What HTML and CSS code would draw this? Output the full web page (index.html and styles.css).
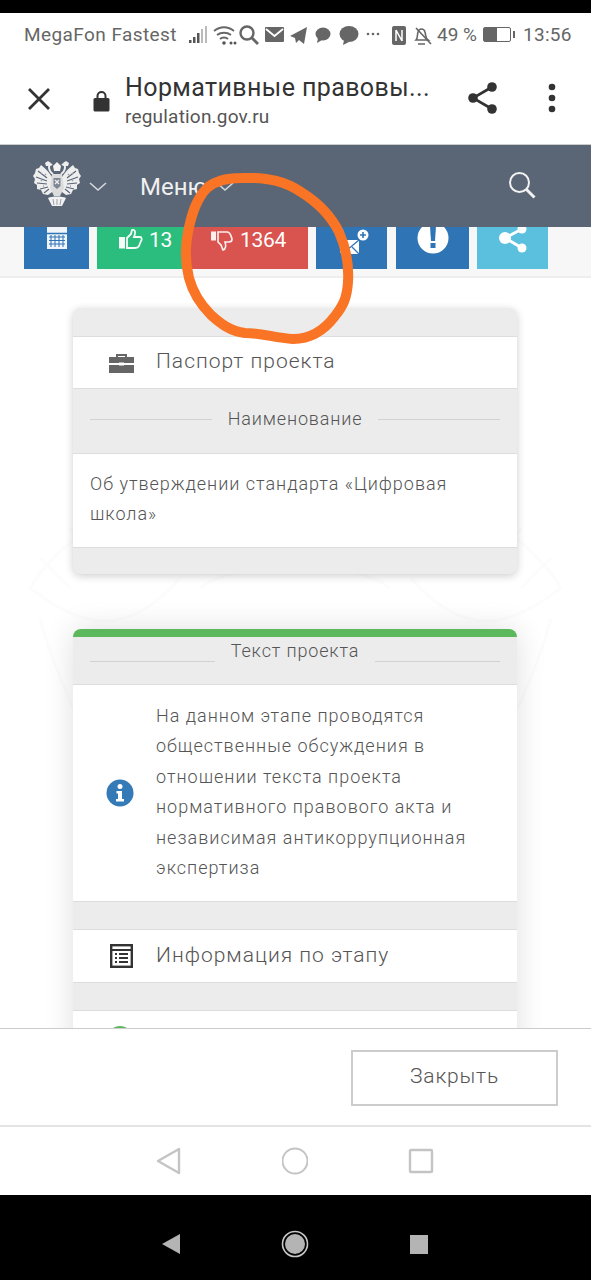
FILE: index.html
```html
<!DOCTYPE html>
<html lang="en">
<head>
    <meta charset="UTF-8">
    <meta name="viewport" content="width=device-width, initial-scale=1.0">
    <title>Нормативные правовые акты</title>
    <link rel="stylesheet" href="styles.css">
</head>
<body>
    <div class="phone-top"></div>

    <div class="status-bar">
        <span class="carrier">MegaFon Fastest</span>
        <svg class="status-icons" width="246" height="24" viewBox="0 0 246 24">
            <!-- signal -->
            <g fill="#555"><rect x="2" y="17" width="2.5" height="3"/><rect x="6" y="14" width="2.5" height="6"/><rect x="10" y="10" width="2.5" height="10"/></g>
            <g fill="#bbb"><rect x="14" y="6" width="2" height="14"/><rect x="18" y="3" width="2" height="17"/></g>
            <!-- wifi -->
            <g fill="none" stroke="#666" stroke-width="1.8"><path d="M27 8c6-5 14-5 20 0"/><path d="M30 12c4-3 10-3 14 0"/><path d="M33 16c2-2 6-2 8 0"/></g>
            <g fill="#555"><circle cx="37" cy="20" r="1.8"/><circle cx="44" cy="20" r="1.5"/><circle cx="48" cy="20" r="1.5"/></g>
            <!-- search -->
            <circle cx="60" cy="10" r="6.5" fill="none" stroke="#666" stroke-width="2.4"/>
            <path d="M65 15l6 6" stroke="#666" stroke-width="2.8"/>
            <!-- mail -->
            <rect x="78" y="4" width="19" height="15" rx="1" fill="#666"/>
            <path d="M79 6l8.500 7 8.500-7" fill="none" stroke="#fff" stroke-width="1.800"/>
            <!-- telegram -->
            <path d="M103 13L120 4l-3 17-5-4-3 3-1-5z" fill="#666"/>
            <!-- bubbles -->
            <ellipse cx="136" cy="11" rx="7.500" ry="6.500" fill="#666"/>
            <path d="M131 15l-1 5 5-3z" fill="#666"/>
            <ellipse cx="162" cy="11" rx="9.500" ry="8" fill="#666"/>
            <path d="M157 17l-1 5 6-3z" fill="#666"/>
            <!-- more -->
            <g fill="#666"><circle cx="181" cy="11" r="1.300"/><circle cx="186" cy="11" r="1.300"/><circle cx="191" cy="11" r="1.300"/></g>
            <!-- nfc -->
            <rect x="205" y="3" width="14" height="19" rx="2" fill="#666"/>
            <path d="M209 7v11M215 7v11M209 7l6 11" stroke="#fff" stroke-width="1.500" fill="none"/>
            <!-- muted bell -->
            <path d="M231 21h7M229 17c2-2 1-5 2-8 1-4 6-4 7 0 1 3 0 6 3 8z" fill="none" stroke="#666" stroke-width="1.600"/>
            <path d="M229 5l15 16" stroke="#666" stroke-width="1.600"/>
        </svg>
        <span class="battery-text">49 %</span>
        <span class="battery"><span class="battery-level"></span></span>
        <span class="clock">13:56</span>
    </div>

    <div class="browser-bar">
        <svg class="close-icon" width="26" height="26" viewBox="0 0 26 26">
            <path d="M3 3l20 20M23 3L3 23" stroke="#333" stroke-width="2.800"/>
        </svg>
        <svg class="lock-icon" width="17" height="22" viewBox="0 0 17 22">
            <path d="M4.500 9V6a4 4 0 0 1 8 0v3" fill="none" stroke="#333" stroke-width="2"/>
            <rect x="0.500" y="8" width="16" height="13.500" rx="1.500" fill="#333"/>
        </svg>
        <div class="browser-title">
            <div class="page-name">Нормативные правовы...</div>
            <div class="page-url">regulation.gov.ru</div>
        </div>
        <svg class="share-icon" width="32" height="34" viewBox="0 0 32 34">
            <path d="M25 6L6 17l19 11" fill="none" stroke="#333" stroke-width="2.600"/>
            <circle cx="25" cy="6" r="4.800" fill="#333"/>
            <circle cx="6" cy="17" r="4.800" fill="#333"/>
            <circle cx="25" cy="28" r="4.800" fill="#333"/>
        </svg>
        <svg class="dots-icon" width="8" height="30" viewBox="0 0 8 30">
            <circle cx="4" cy="4" r="3.300" fill="#333"/>
            <circle cx="4" cy="15" r="3.300" fill="#333"/>
            <circle cx="4" cy="26" r="3.300" fill="#333"/>
        </svg>
    </div>

    <div class="site-nav">
        <svg class="emblem" width="48" height="46" viewBox="0 0 48 46">
            <defs>
                <g id="eagle-wing">
                    <path d="M19 16C16 11 12 7 8 4L6 7 3 8 2 12 0 15l2 3-1 4 3 2v4l4 1 2 4 5 1 4-3z" fill="#eee"/>
                    <path d="M5 10l9 7M3 16l11 4M4 22l10 1M7 28l8-2M11 32l5-4" stroke="#5a6576" stroke-width="1.100" fill="none"/>
                    <path d="M8 12l1 1M12 13l1 1M8 19l1 1M10 25l1 0" stroke="#9aa2ae" stroke-width="1.500"/>
                    <!-- head and crown -->
                    <path d="M20 13c-3-2-4-4-4-7 0-2 2-3 3-2" fill="none" stroke="#eee" stroke-width="2"/>
                    <path d="M12 2l3-2 3 2-1 3h-4z" fill="#eee"/>
                </g>
            </defs>
            <use href="#eagle-wing"/>
            <use href="#eagle-wing" transform="matrix(-1 0 0 1 48 0)"/>
            <!-- middle crown -->
            <path d="M20 5l4-4 4 4-1 5h-6z" fill="#f4f4f4"/>
            <!-- body and shield -->
            <path d="M19 13h10l2 14-4 8h-6l-4-8z" fill="#dcdcdc"/>
            <path d="M20.500 17h7v8l-3.500 3-3.500-3z" fill="#7d8694"/>
            <path d="M22 19l4 4M26 19l-4 4" stroke="#eee" stroke-width="1.300"/>
            <!-- tail -->
            <path d="M15 37c4-2 14-2 18 0l-4 8h-10z" fill="#f2f2f2"/>
            <path d="M20 38l1 6M24 38v6M28 38l-1 6" stroke="#8d95a2" stroke-width="0.900"/>
        </svg>
        <svg class="chevron" width="18" height="10" viewBox="0 0 18 10"><path d="M1 1l8 7 8-7" fill="none" stroke="#d5d8dd" stroke-width="1.600"/></svg>
        <span class="menu-label">Меню</span>
        <svg class="chevron" width="18" height="10" viewBox="0 0 18 10"><path d="M1 1l8 7 8-7" fill="none" stroke="#d5d8dd" stroke-width="1.600"/></svg>
        <svg class="site-search" width="28" height="28" viewBox="0 0 28 28">
            <circle cx="11.500" cy="11.500" r="9.500" fill="none" stroke="#f2f2f2" stroke-width="2"/>
            <path d="M18.500 18.500l8 8" stroke="#f2f2f2" stroke-width="3"/>
        </svg>
    </div>

    <div class="toolbar">
        <div class="tool tool-blue tool-calendar">
            <svg width="22" height="26" viewBox="0 0 22 26">
                <path d="M1 2h20v22H1z" fill="#f1f4f8"/>
                <path d="M0 8.500h22" stroke="#2f75b5" stroke-width="1.500"/>
                <path d="M3 12h16M3 15.500h16M3 19h16M5 10v12M9 10v12M13 10v12M17 10v12" stroke="#2f75b5" stroke-width="1"/>
            </svg>
        </div>
        <div class="tool tool-green tool-up">
            <svg width="24" height="20" viewBox="0 0 24 20">
                <rect x="0" y="8" width="6" height="11.500" fill="#f4fbf8"/>
                <path d="M8 9l4-4 1-4c3-1 4 2 2 7h6c2 0 2 3 1 4l-2 5c-1 2-2 2-4 2H8z" fill="none" stroke="#f4fbf8" stroke-width="1.800"/>
            </svg>
            <span>13</span>
        </div>
        <div class="tool tool-red">
            <svg width="22" height="20" viewBox="0 0 22 20">
                <rect x="0" y="0.500" width="5" height="9" fill="#fbeeee"/>
                <path d="M7 1h9c2 0 3 1 4 4l1 3c0 2-1 3-3 3h-4c1 3 1 7-2 8l-2-5-3-3z" fill="none" stroke="#fbeeee" stroke-width="1.700"/>
            </svg>
            <span>1364</span>
        </div>
        <div class="tool tool-blue tool-mail">
            <svg width="30" height="30" viewBox="0 0 30 30">
                <path d="M1 12h19v14H1z" fill="#fff"/>
                <path d="M1 12l9.500 8 9.500-8M1 26l7-7M20 26l-7-7" fill="none" stroke="#2f75b5" stroke-width="1.300"/>
                <circle cx="24" cy="7" r="5.500" fill="#fff"/>
                <path d="M24 4v6M21 7h6" stroke="#2f75b5" stroke-width="1.600"/>
            </svg>
        </div>
        <div class="tool tool-blue tool-alert">
            <svg width="32" height="32" viewBox="0 0 32 32">
                <circle cx="16" cy="16" r="15.500" fill="#fff"/>
                <path d="M13 4h6l-1 15h-4z" fill="#2f75b5"/>
                <rect x="13.500" y="21" width="5" height="5" fill="#2f75b5"/>
            </svg>
        </div>
        <div class="tool tool-cyan">
            <svg width="30" height="30" viewBox="0 0 30 30">
                <path d="M24 5L7 14l17 10" fill="none" stroke="#fff" stroke-width="3"/>
                <circle cx="24" cy="5" r="4.500" fill="#fff"/>
                <circle cx="7" cy="14" r="6" fill="#fff"/>
                <circle cx="24" cy="24" r="4.500" fill="#fff"/>
            </svg>
        </div>
    </div>

    <div class="content">
        <!-- faint emblem behind the cards -->
        <svg class="watermark" width="591" height="260" viewBox="0 0 591 260">
            <g fill="none" stroke="#fcfcfc" stroke-width="3">
                <path d="M30 120C60 70 120 40 170 10M40 90l30 30M70 60l25 40M105 35l20 40"/>
                <path d="M561 120C531 70 471 40 421 10M551 90l-30 30M521 60l-25 40M486 35l-20 40"/>
                <path d="M30 120c40 30 90 60 150-10M200 120c40-30 150-30 190 0M561 120c-40 30-90 60-150-10"/>
                <path d="M40 150c10 40 25 70 33 90M551 150c-10 40-25 70-33 90"/>
            </g>
        </svg>

        <div class="card">
            <div class="card-gap"></div>
            <div class="row">
                <svg class="row-icon" width="25" height="20" viewBox="0 0 25 20">
                    <path d="M8 4V2h9v2" fill="none" stroke="#666" stroke-width="2"/>
                    <path d="M0 4h25v6H0zM0 12h25v8H0z" fill="#666"/>
                    <rect x="10" y="9.500" width="5" height="3" fill="#fff"/>
                </svg>
                <span class="row-text">Паспорт проекта</span>
            </div>
            <div class="legend">
                <span class="legend-line"></span>
                <span>Наименование</span>
                <span class="legend-line"></span>
            </div>
            <div class="name-text">Об утверждении стандарта «Цифровая школа»</div>
            <div class="card-foot"></div>
        </div>

        <div class="card card-green">
            <div class="legend legend-top">
                <span class="legend-line"></span>
                <span>Текст проекта</span>
                <span class="legend-line"></span>
            </div>
            <div class="info-row">
                <svg class="info-icon" width="28" height="28" viewBox="0 0 28 28">
                    <circle cx="14" cy="14" r="13.500" fill="#337ab7"/>
                    <circle cx="14" cy="7.500" r="2.500" fill="#fff"/>
                    <path d="M10.500 12h5.500v8h2v2.500h-8V20h2v-5.500h-1.500z" fill="#fff"/>
                </svg>
                <p>На данном этапе проводятся общественные обсуждения в отношении текста проекта нормативного правового акта и независимая антикоррупционная экспертиза</p>
            </div>
            <div class="card-gap"></div>
            <div class="row">
                <svg class="row-icon" width="23" height="24" viewBox="0 0 23 24">
                    <rect x="1.200" y="1.200" width="20.600" height="21.600" fill="none" stroke="#333" stroke-width="2.400"/>
                    <path d="M1 6h21" stroke="#333" stroke-width="2"/>
                    <path d="M5 10h2M9 10h9M5 14h2M9 14h9M5 18h2M9 18h9" stroke="#333" stroke-width="1.800"/>
                </svg>
                <span class="row-text">Информация по этапу</span>
            </div>
            <div class="card-gap"></div>
            <div class="row row-cut">
                <span class="green-dot"></span>
            </div>
        </div>
    </div>

    <div class="footer">
        <button class="close-btn" type="button">Закрыть</button>
    </div>

    <div class="soft-nav">
        <svg width="26" height="28" viewBox="0 0 26 28"><path d="M23 2v24L2 14z" fill="none" stroke="#c4c4c4" stroke-width="2.400" stroke-linejoin="round"/></svg>
        <svg width="26" height="28" viewBox="0 0 26 28"><circle cx="13" cy="14" r="12.500" fill="none" stroke="#c4c4c4" stroke-width="2"/></svg>
        <svg width="26" height="28" viewBox="0 0 26 28"><rect x="2" y="3" width="22" height="22" rx="1" fill="none" stroke="#c4c4c4" stroke-width="2.400"/></svg>
    </div>

    <div class="hard-nav">
        <svg width="26" height="28" viewBox="0 0 26 28"><path d="M22 4v20L4 14z" fill="#b4b4b4"/></svg>
        <svg width="28" height="28" viewBox="0 0 28 28"><circle cx="14" cy="14" r="12.500" fill="none" stroke="#c8c8c8" stroke-width="1.600"/><circle cx="14" cy="14" r="10" fill="#b4b4b4"/></svg>
        <svg width="26" height="28" viewBox="0 0 26 28"><rect x="4" y="5" width="18" height="19" fill="#b4b4b4"/></svg>
    </div>

    <!-- marker drawn over the screenshot -->
    <svg class="marker" width="591" height="400" viewBox="0 0 591 400">
        <path d="M241 178C270 177 286 182 301 192C322 205 332 218 339 232C347 250 349 265 348 282C347 298 343 306 335 316C326 328 312 339 293 339C275 338 262 333 245 333C230 331 221 324 211 315C201 305 193 293 189 278C185 262 185 247 188 232C192 212 197 198 207 188C216 180 228 178 241 178Z" fill="none" stroke="#f97424" stroke-width="10"/>
    </svg>
</body>
</html>
```
FILE: styles.css
```css
body {
    margin: 0;
    width: 591px;
    height: 1280px;
    overflow: hidden;
    position: relative;
    font-family: Roboto, "Noto Sans", sans-serif;
    background: #fff;
    color: #333;
}

.phone-top { height: 13px; background: #000; }

.status-bar {
    height: 43px;
    display: flex;
    align-items: center;
    padding-left: 24px;
    font-size: 19px;
    color: #666;
}
.carrier { width: 163px; letter-spacing: 0.42px; }
.battery-text { width: 46px; margin-left: 4px; }
.battery {
    width: 26px;
    height: 13px;
    border: 1.5px solid #666;
    border-radius: 2px;
    margin-right: 12px;
    position: relative;
}
.battery::after {
    content: "";
    position: absolute;
    right: -5px;
    top: 3px;
    width: 2px;
    height: 7px;
    background: #666;
}
.battery-level { display: block; width: 13px; height: 13px; background: #666; }
.clock { letter-spacing: 0.3px; }

.browser-bar {
    height: 89px;
    display: flex;
    align-items: center;
    border-bottom: 1px solid #ccc;
    box-sizing: border-box;
}
.close-icon { margin-left: 26px; margin-top: -2px; }
.lock-icon { margin-left: 41px; margin-top: 2px; }
.browser-title { margin-left: 15px; width: 343px; margin-top: -1px; }
.page-name { font-size: 25px; line-height: 34px; letter-spacing: 0.4px; color: #333; }
.page-url { font-size: 19px; line-height: 23px; color: #555; letter-spacing: 0.2px; }
.share-icon { margin-left: -1px; margin-right: 49px; margin-top: -4px; }
.dots-icon { margin-top: -4px; }

.site-nav {
    height: 82px;
    background: #5a6576;
    display: flex;
    align-items: center;
    padding-left: 33px;
    color: #f0f0f0;
    font-size: 24px;
}
.emblem { margin-top: -4px; }
.site-nav .chevron { margin-left: 8px; margin-top: 2px; }
.menu-label { margin-left: 33px; width: 68px; margin-top: 2px; }
.site-search { margin-left: 274px; margin-top: -2px; }

.toolbar {
    height: 51px;
    box-sizing: border-box;
    background: #f7f7f7;
    border-bottom: 2px solid #eee;
    display: flex;
    padding-left: 24px;
    align-items: flex-start;
}
.tool {
    height: 42px;
    box-sizing: border-box;
    display: flex;
    justify-content: center;
    overflow: hidden;
    color: #fff;
    font-size: 21px;
    gap: 7px;
}
.tool span { line-height: 26px; letter-spacing: -0.3px; }
.tool-blue { background: #2f75b5; }
.tool-green { background: #2bbd7e; }
.tool-red { background: #d9534f; }
.tool-cyan { background: #5bc0de; }
.tool-calendar { width: 65px; margin-right: 8px; }
.tool-calendar svg { margin-top: -2px; }
.tool-up { width: 88px; padding-left: 9px; gap: 6px; }
.tool-up svg { margin-top: 2px; }
.tool-red { width: 123px; margin-right: 8px; padding-left: 4px; }
.tool-red svg { margin-top: 4px; }
.tool-mail { width: 71px; margin-right: 9px; }
.tool-mail svg { margin-top: 1px; margin-left: 4px; }
.tool-alert { width: 73px; margin-right: 8px; }
.tool-alert svg { margin-top: -5px; }
.tool-cyan { width: 71px; }
.tool-cyan svg { margin-top: -3px; }

.content {
    height: 750px;
    box-sizing: border-box;
    overflow: hidden;
    position: relative;
    padding: 30px 74px 0 73px;
    background: #fff;
    font-weight: 300;
    color: #555;
}
.watermark {
    position: absolute;
    top: 190px;
    left: 0;
}
.card {
    position: relative;
    background: #ececec;
    border-radius: 8px;
    box-shadow: 0 2px 8px rgba(0, 0, 0, 0.2);
    margin-bottom: 55px;
}
.card-green {
    border-top: 8px solid #5cb85c;
    box-shadow: 0 0 30px rgba(0, 0, 0, 0.13);
}
.card-gap { height: 28px; }
.card-green .card-gap { height: 27px; }
.card-foot { height: 26px; }

.row {
    height: 53px;
    box-sizing: border-box;
    background: #fff;
    border-top: 1px solid #ddd;
    border-bottom: 1px solid #ddd;
    display: flex;
    align-items: center;
    font-size: 21px;
    letter-spacing: 1px;
}
.card-green .row { height: 54px; }
.row-text { margin-top: -3px; }
.row-icon { margin-left: 36px; width: 25px; margin-right: 22px; }
.card-green .row-cut { height: 60px; align-items: flex-start; }
.green-dot {
    width: 26px;
    height: 26px;
    border-radius: 50%;
    background: #5cb85c;
    margin: 15px 0 0 34px;
}

.legend {
    height: 64px;
    box-sizing: border-box;
    display: flex;
    align-items: center;
    padding: 0 17px 5px;
    gap: 16px;
    font-size: 18px;
    letter-spacing: 0.85px;
}
.legend-line { flex: 1; height: 1px; background: #d2d2d2; margin-top: 2px; }
.legend-top { height: 47px; padding-bottom: 0; align-items: flex-start; line-height: 28px; }
.legend-top .legend-line { margin-top: 24px; }

.name-text {
    background: #fff;
    border-top: 1px solid #ddd;
    border-bottom: 1px solid #ddd;
    padding: 15px 40px 18px 17px;
    font-size: 18px;
    line-height: 30px;
    letter-spacing: 0.98px;
}

.info-row {
    background: #fff;
    border-top: 1px solid #ddd;
    border-bottom: 1px solid #ddd;
    display: flex;
    align-items: center;
}
.info-row p {
    margin: 16px 30px 18px 22px;
    font-size: 18px;
    line-height: 30.400px;
    letter-spacing: 1px;
}
.info-icon { margin-left: 33px; flex-shrink: 0; }

.footer {
    height: 99px;
    box-sizing: border-box;
    background: #fff;
    border-top: 1px solid #ccc;
    border-bottom: 2px solid #e4e4e4;
    display: flex;
    justify-content: flex-end;
    padding: 21px 33px 0 0;
}
.close-btn {
    width: 207px;
    height: 56px;
    padding-bottom: 5px;
    background: #fff;
    border: 2px solid #ccc;
    color: #555;
    font-family: Roboto, sans-serif;
    font-weight: 300;
    font-size: 21px;
    letter-spacing: 0.8px;
}

.soft-nav {
    height: 68px;
    box-sizing: border-box;
    padding-right: 2px;
    background: #fff;
    display: flex;
    justify-content: center;
    align-items: center;
    gap: 100px;
}

.hard-nav {
    height: 85px;
    box-sizing: border-box;
    padding: 13px 1px 0 0;
    background: #000;
    display: flex;
    justify-content: center;
    align-items: center;
    gap: 97px;
}

.marker {
    position: absolute;
    top: 0;
    left: 0;
}
```
